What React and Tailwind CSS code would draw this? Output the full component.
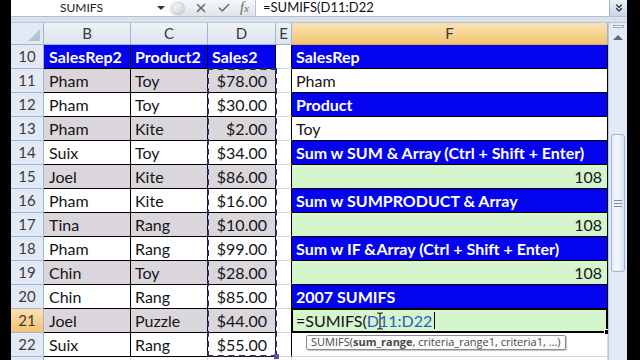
import { X, Check, ChevronsDown } from 'lucide-react';

const rows = [
  { n: 10, b: 'SalesRep2', c: 'Product2', d: 'Sales2', f: 'SalesRep', kind: 'blue' },
  { n: 11, b: 'Pham', c: 'Toy', d: '$78.00', f: 'Pham', kind: 'white' },
  { n: 12, b: 'Pham', c: 'Toy', d: '$30.00', f: 'Product', kind: 'blue' },
  { n: 13, b: 'Pham', c: 'Kite', d: '$2.00', f: 'Toy', kind: 'white' },
  { n: 14, b: 'Suix', c: 'Toy', d: '$34.00', f: 'Sum w SUM & Array (Ctrl + Shift + Enter)', kind: 'blue' },
  { n: 15, b: 'Joel', c: 'Kite', d: '$86.00', f: '108', kind: 'green' },
  { n: 16, b: 'Pham', c: 'Kite', d: '$16.00', f: 'Sum w SUMPRODUCT & Array', kind: 'blue' },
  { n: 17, b: 'Tina', c: 'Rang', d: '$10.00', f: '108', kind: 'green' },
  { n: 18, b: 'Pham', c: 'Rang', d: '$99.00', f: 'Sum w IF &Array (Ctrl + Shift + Enter)', kind: 'blue' },
  { n: 19, b: 'Chin', c: 'Toy', d: '$28.00', f: '108', kind: 'green' },
  { n: 20, b: 'Chin', c: 'Rang', d: '$85.00', f: '2007 SUMIFS', kind: 'blue' },
  { n: 21, b: 'Joel', c: 'Puzzle', d: '$44.00', f: '', kind: 'edit' },
  { n: 22, b: 'Suix', c: 'Rang', d: '$55.00', f: '', kind: 'empty' },
];

const colHead = 'h-[22px] flex items-center justify-center border-r border-b border-[#9eb6ce] text-[15px] text-[#3a3a3a]';
const cell = 'h-[24px] flex items-center border-r border-b whitespace-nowrap overflow-hidden text-[16px]';

function DataCells({ r }) {
  const head = r.n === 10;
  const shade = head ? 'bg-[#0303ee] text-white font-bold' : r.n % 2 === 1 ? 'bg-[#dbd6dc] text-[#151515]' : 'bg-white text-[#151515]';
  return (
    <>
      <div className={`${cell} border-black pl-[5px] ${shade}`}>{r.b}</div>
      <div className={`${cell} border-black pl-[4px] ${shade}`}>{r.c}</div>
      <div className={`${cell} border-black ${head ? 'pl-[4px]' : 'justify-end pr-[8px]'} ${shade}`}>{r.d}</div>
    </>
  );
}

function FCell({ r }) {
  if (r.kind === 'blue') {
    return <div className={`${cell} border-black bg-[#0303ee] text-white font-bold px-[4px]`}>{r.f}</div>;
  }
  if (r.kind === 'white') {
    return <div className={`${cell} border-black bg-white text-[#151515] px-[4px]`}>{r.f}</div>;
  }
  if (r.kind === 'green') {
    return <div className={`${cell} border-black bg-[#d5f5cd] text-[#151515] justify-end pr-[5px]`}>{r.f}</div>;
  }
  if (r.kind === 'edit') {
    return (
      <div className={`${cell} relative overflow-visible border-black bg-[#d5f5cd] text-[#151515] px-[4px]`}>
        <span>=SUMIFS(</span>
        <span className="text-[#2d5cbf]">D11:D22</span>
        <span className="inline-block w-px h-[17px] bg-black ml-[2px]" />
        <span className="absolute -left-px -top-px -right-px -bottom-px border-2 border-black pointer-events-none" />
        <span className="absolute -right-[3px] -bottom-[3px] w-[6px] h-[6px] bg-black border border-white" />
        <svg className="absolute left-[84px] top-[3px]" width="8" height="18" viewBox="0 0 8 18">
          <path d="M1 1h2l1 1 1-1h2M4 2v14M1 17h2l1-1 1 1h2" stroke="#222" strokeWidth="1.2" fill="none" />
        </svg>
      </div>
    );
  }
  return <div className={`${cell} border-[#d0d7e5] bg-white`} />;
}

export default function App() {
  return (
    <div className="w-[640px] h-[360px] bg-black flex overflow-hidden font-['Lato',sans-serif]">
      <div className="w-[11px] shrink-0" />
      <div className="w-[616px] shrink-0 flex flex-col bg-white">
        {/* formula bar */}
        <div className="h-[17px] flex items-stretch border-b border-[#aebfd6] bg-white">
          <div className="w-[141px] flex items-center justify-center text-[12px] text-[#222]">SUMIFS</div>
          <div className="w-[17px] flex items-center justify-center">
            <span className="block w-0 h-0 border-x-[4px] border-x-transparent border-t-[4px] border-t-[#333]" />
          </div>
          <div className="w-[87px] flex items-center gap-[9px] rounded-l-full bg-gradient-to-b from-[#f6f7f9] to-[#dfe3ea] border-r border-[#b9c4d3] pl-[3px]">
            <span className="block w-[13px] h-[13px] rounded-full bg-gradient-to-br from-[#ffffff] to-[#c9ced6] border border-[#c4cad3]" />
            <X size={14} strokeWidth={2.6} color="#6a6a6a" />
            <Check size={14} strokeWidth={2.6} color="#6a6a6a" />
            <span className="font-['Liberation_Serif',serif] italic text-[14px] text-[#6a6a6a] leading-none">
              f<span className="text-[11px]">x</span>
            </span>
          </div>
          <div className="flex-1 flex items-center pl-[7px] text-[13px] text-[#111]">=SUMIFS(D11:D22</div>
          <div className="w-[18px] flex items-center justify-center bg-gradient-to-b from-[#e9eef6] to-[#c9d6e8] border-l border-[#9fb3cf]">
            <ChevronsDown size={12} strokeWidth={2.4} color="#333" />
          </div>
        </div>
        <div className="h-[6px] bg-[#dbe1ea] border-b border-[#b8c5d6]" />

        <div className="flex flex-1 min-h-0">
          {/* sheet grid */}
          <div className="relative w-[597px] overflow-hidden">
            <div className="grid grid-cols-[33px_87px_77px_68px_16px_316px]">
              <div className="h-[22px] border-r border-b border-[#9eb6ce] bg-[#e4eaf3] flex items-end justify-end p-[3px]">
                <svg width="12" height="12" viewBox="0 0 12 12"><path d="M12 0V12H0Z" fill="#b6c3d5" /></svg>
              </div>
              <div className={`${colHead} bg-gradient-to-b from-[#eef2f8] to-[#dce4ef]`}>B</div>
              <div className={`${colHead} bg-gradient-to-b from-[#eef2f8] to-[#dce4ef]`}>C</div>
              <div className={`${colHead} bg-gradient-to-b from-[#eef2f8] to-[#dce4ef]`}>D</div>
              <div className={`${colHead} bg-gradient-to-b from-[#eef2f8] to-[#dce4ef]`}>E</div>
              <div className={`${colHead} bg-gradient-to-b from-[#fbe3b6] to-[#f2c56f] border-b-[#e0a94a]`}>F</div>

              {rows.map((r) => (
                <div key={r.n} className="contents">
                  <div
                    className={`h-[24px] flex items-center justify-center border-r border-b border-[#9eb6ce] text-[15px] text-[#3a3a3a] ${
                      r.n === 21 ? 'bg-gradient-to-b from-[#fbe0ac] to-[#f5c370]' : 'bg-[#e4eaf5]'
                    }`}
                  >
                    {r.n}
                  </div>
                  <DataCells r={r} />
                  <div className={`${cell} border-b-[#d0d7e5] border-r-black bg-white`} />
                  <FCell r={r} />
                </div>
              ))}

              <div className="h-[24px] border-r border-b border-[#9eb6ce] bg-[#e4eaf5]" />
              <div className={`${cell} border-[#d0d7e5]`} />
              <div className={`${cell} border-[#d0d7e5]`} />
              <div className={`${cell} border-[#d0d7e5]`} />
              <div className={`${cell} border-[#d0d7e5]`} />
              <div className={`${cell} border-[#d0d7e5]`} />
            </div>

            {/* marching ants around D11:D22 */}
            <div className="absolute left-[196px] top-[45px] w-[70px] h-[289px] border-2 border-dashed border-[#2a2a66] pointer-events-none">
              <span className="absolute -right-[4px] -bottom-[4px] w-[5px] h-[5px] bg-[#6b4aa8]" />
            </div>

            {/* function tooltip */}
            <div className="absolute left-[295px] top-[312px] h-[15px] px-[4px] flex items-center bg-[#fbfbfb] border border-[#8c8c8c] rounded-[2px] shadow-[1px_1px_1px_rgba(0,0,0,0.25)] text-[11px] text-[#4a4a4a] whitespace-nowrap font-['Open_Sans',sans-serif]">
              SUMIFS(<span className="font-bold">sum_range</span>, criteria_range1, criteria1, ...)
            </div>
          </div>

          {/* vertical scrollbar */}
          <div className="w-[19px] flex flex-col bg-[#e3eaf4] border-l border-[#b6c6dc]">
            <div className="h-[7px] flex items-center justify-center">
              <span className="block w-[11px] h-[3px] bg-[#f4f7fb] border border-[#9aaecb]" />
            </div>
            <div className="h-[14px] flex items-center justify-center">
              <span className="block w-0 h-0 border-x-[5px] border-x-transparent border-b-[5px] border-b-[#5a6b85]" />
            </div>
            <div className="h-[90px]" />
            <div className="h-[138px] mx-[2px] rounded-[3px] border border-[#9fb3cf] bg-gradient-to-r from-[#e9eef7] via-[#f4f7fb] to-[#d7e1ee] flex flex-col items-center justify-center gap-[2px]">
              <span className="block w-[8px] h-px bg-[#7d8fa9]" />
              <span className="block w-[8px] h-px bg-[#7d8fa9]" />
              <span className="block w-[8px] h-px bg-[#7d8fa9]" />
            </div>
            <div className="flex-1" />
          </div>
        </div>
      </div>
      <div className="flex-1" />
    </div>
  );
}
